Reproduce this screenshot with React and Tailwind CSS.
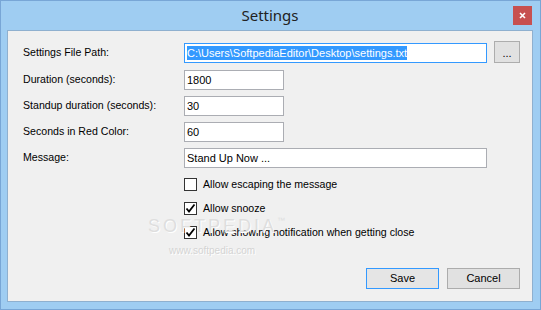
import React from 'react';

const font = { fontFamily: '"Liberation Sans", Arial, sans-serif' };

const Field = ({ value, wide, focused }) => (
  <div
    className={`h-[20px] border bg-white flex items-center pl-[2px] text-[11px] text-black ${
      wide ? 'w-[303px]' : 'w-[100px]'
    } ${focused ? 'border-[#3399ff]' : 'border-[#abadb3]'}`}
  >
    {focused ? (
      <span className="bg-[#3399ff] text-white leading-[14px]">{value}</span>
    ) : (
      <span className="leading-[14px]">{value}</span>
    )}
  </div>
);

const Check = ({ checked, label }) => (
  <div className="flex items-center h-[13px] gap-[6px]">
    <div className="w-[13px] h-[13px] border border-[#333333] bg-white flex items-center justify-center">
      {checked && (
        <svg width="11" height="11" viewBox="0 0 11 11">
          <path d="M1.5 5.5 L4 8.5 L9.5 1.5" fill="none" stroke="#000" strokeWidth="1.8" />
        </svg>
      )}
    </div>
    <span className="text-[10.6px] leading-[13px] text-black">{label}</span>
  </div>
);

const rows = [
  ['Duration (seconds):', '1800'],
  ['Standup duration (seconds):', '30'],
  ['Seconds in Red Color:', '60'],
];

export default function App() {
  return (
    <div
      className="w-[541px] h-[310px] border border-[#78a6d6] bg-[#9fcdf2] flex flex-col pl-[6px] pr-[7px] pb-[7px] relative overflow-hidden"
      style={font}
    >
      {/* title bar */}
      <div className="h-[29px] relative flex items-center justify-center">
        <span
          className="text-[15px] text-[#222222]"
          style={{ fontFamily: '"Noto Sans", "Open Sans", sans-serif' }}
        >
          Settings
        </span>
        <div className="absolute right-[1px] top-[5px] w-[19px] h-[19px] bg-[#c75050] flex items-center justify-center">
          <svg width="7" height="7" viewBox="0 0 7 7">
            <path d="M1 1 L6 6 M6 1 L1 6" stroke="#fff" strokeWidth="1.6" />
          </svg>
        </div>
      </div>

      {/* client area */}
      <div className="flex-1 border border-[#8fb0cf] bg-[#f0f0f0] flex flex-col pl-[15px] pr-[12px] pt-[10px]">
        <div className="flex items-end h-[22px]">
          <span className="w-[161px] text-[10.6px] text-black self-center pt-[2px]">Settings File Path:</span>
          <Field value="C:\Users\SoftpediaEditor\Desktop\settings.txt" wide focused />
          <div className="ml-[7px] w-[26px] h-[22px] border border-[#adadad] bg-[#e1e1e1] flex items-center justify-center text-[11px] text-black pt-[2px]">
            ...
          </div>
        </div>
        {rows.map(([label, value], i) => (
          <div key={label} className={`flex items-center h-[20px] ${i === 0 ? 'mt-[7px]' : 'mt-[6px]'}`}>
            <span className="w-[161px] text-[10.6px] text-black">{label}</span>
            <Field value={value} />
          </div>
        ))}
        <div className="flex items-center h-[20px] mt-[6px]">
          <span className="w-[161px] text-[10.6px] text-black">Message:</span>
          <Field value="Stand Up Now ..." wide />
        </div>

        <div className="flex flex-col gap-[11px] mt-[10px] pl-[161px]">
          <Check label="Allow escaping the message" />
          <Check checked label="Allow snooze" />
          <Check checked label="Allow showing notification when getting close" />
        </div>

        <div className="mt-auto mb-[12px] flex justify-end gap-[8px]">
          <div className="w-[73px] h-[21px] border border-[#3399ff] bg-[#e5e5e5] flex items-center justify-center text-[11px] text-black">
            Save
          </div>
          <div className="w-[73px] h-[21px] border border-[#acacac] bg-[#e1e1e1] flex items-center justify-center text-[11px] text-black">
            Cancel
          </div>
        </div>
      </div>

      {/* watermark */}
      <div className="absolute left-[147px] top-[216px] pointer-events-none flex items-start">
        <span
          className="text-[18px] tracking-[3px] text-[#dedede] leading-[18px]"
          style={{ textShadow: '1px 1px 0 #ffffff' }}
        >
          SOFTPEDIA
        </span>
        <span className="text-[8px] text-[#dedede] leading-[8px]">™</span>
      </div>
      <div
        className="absolute left-[168px] top-[242px] text-[10px] text-[#d4d4d4] pointer-events-none"
        style={{ textShadow: '1px 1px 0 #ffffff' }}
      >
        www.softpedia.com
      </div>
    </div>
  );
}
